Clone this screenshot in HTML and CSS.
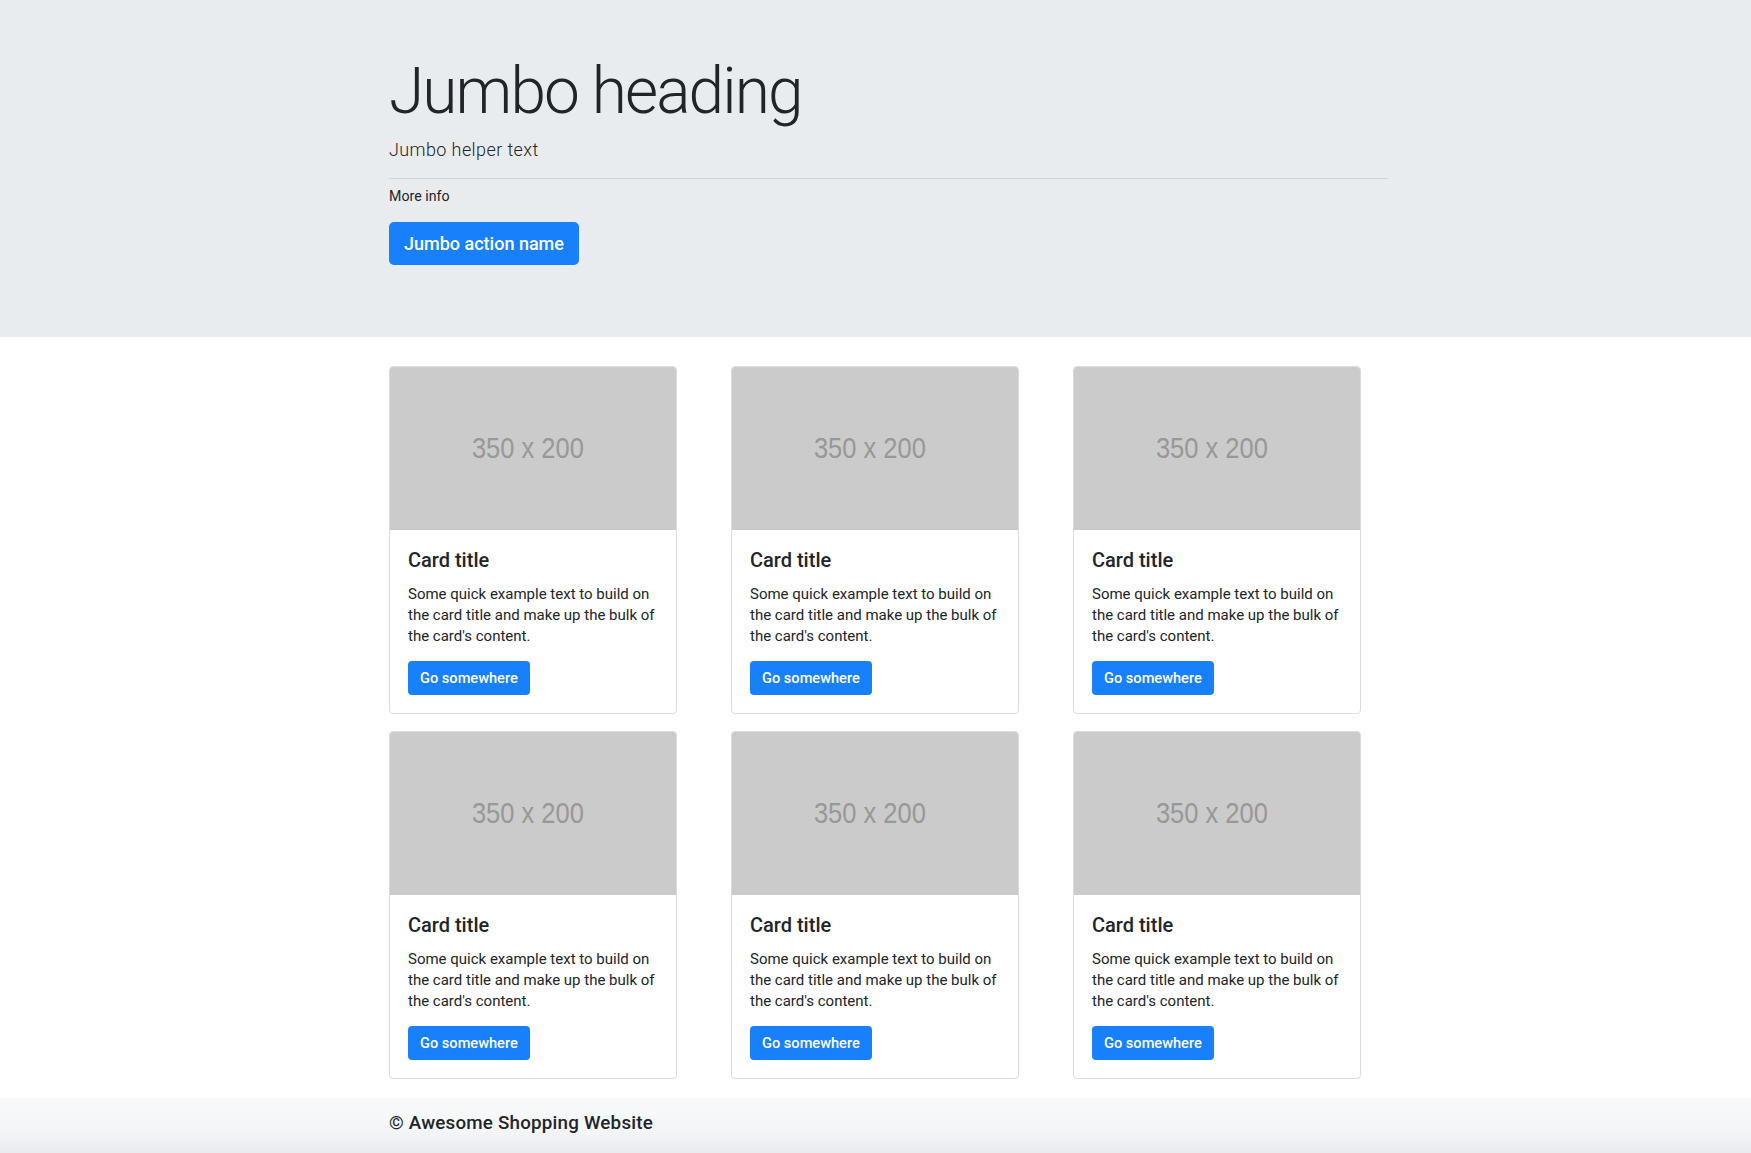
FILE: index.html
```html
<!DOCTYPE html>
<html lang="en">
<head>
<meta charset="utf-8">
<title>Awesome Shopping Website</title>
<link rel="stylesheet" href="styles.css">
</head>
<body>
<header class="jumbotron">
  <div class="container">
    <h1 class="display">Jumbo heading</h1>
    <p class="lead">Jumbo helper text</p>
    <hr class="divider">
    <p class="more">More info</p>
    <a class="btn btn-lg" href="#">Jumbo action name</a>
  </div>
</header>
<main class="container">
  <div class="card-grid">
    <div class="card">
      <div class="placeholder"><span>350 x 200</span></div>
      <div class="card-body">
        <h5 class="card-title">Card title</h5>
        <p class="card-text">Some quick example text to build on the card title and make up the bulk of the card's content.</p>
        <a class="btn btn-sm" href="#">Go somewhere</a>
      </div>
    </div>
    <div class="card">
      <div class="placeholder"><span>350 x 200</span></div>
      <div class="card-body">
        <h5 class="card-title">Card title</h5>
        <p class="card-text">Some quick example text to build on the card title and make up the bulk of the card's content.</p>
        <a class="btn btn-sm" href="#">Go somewhere</a>
      </div>
    </div>
    <div class="card">
      <div class="placeholder"><span>350 x 200</span></div>
      <div class="card-body">
        <h5 class="card-title">Card title</h5>
        <p class="card-text">Some quick example text to build on the card title and make up the bulk of the card's content.</p>
        <a class="btn btn-sm" href="#">Go somewhere</a>
      </div>
    </div>
    <div class="card">
      <div class="placeholder"><span>350 x 200</span></div>
      <div class="card-body">
        <h5 class="card-title">Card title</h5>
        <p class="card-text">Some quick example text to build on the card title and make up the bulk of the card's content.</p>
        <a class="btn btn-sm" href="#">Go somewhere</a>
      </div>
    </div>
    <div class="card">
      <div class="placeholder"><span>350 x 200</span></div>
      <div class="card-body">
        <h5 class="card-title">Card title</h5>
        <p class="card-text">Some quick example text to build on the card title and make up the bulk of the card's content.</p>
        <a class="btn btn-sm" href="#">Go somewhere</a>
      </div>
    </div>
    <div class="card">
      <div class="placeholder"><span>350 x 200</span></div>
      <div class="card-body">
        <h5 class="card-title">Card title</h5>
        <p class="card-text">Some quick example text to build on the card title and make up the bulk of the card's content.</p>
        <a class="btn btn-sm" href="#">Go somewhere</a>
      </div>
    </div>
  </div>
</main>
<footer class="footer">
  <div class="container">
    <p class="copyright">© Awesome Shopping Website</p>
  </div>
</footer>
</body>
</html>
```
FILE: styles.css
```css
* { box-sizing: border-box; }

html, body {
  margin: 0;
  padding: 0;
}

body {
  font-family: Roboto, "Noto Sans", "Liberation Sans", sans-serif;
  color: #212529;
  background: #fff;
}

.container {
  width: 1025px;
  margin: 0 auto;
  padding-left: 26px;
}

.jumbotron {
  background: #e9ecef;
  padding: 54px 0 72px;
}

.display {
  margin: 0;
  font-size: 64px;
  font-weight: 300;
  line-height: 1.2;
  letter-spacing: -1.9px;
}

.lead {
  margin: 5px 0 0;
  font-size: 18px;
  font-weight: 300;
  line-height: 1.5;
  letter-spacing: 0.4px;
}

.divider {
  margin: 15px 0 0;
  border: 0;
  border-top: 1px solid #d2d5d8;
  height: 0;
}

.more {
  margin: 7px 0 0;
  font-size: 14.2px;
  line-height: 21px;
}

.btn {
  display: inline-flex;
  align-items: center;
  color: #fff;
  background: #1880fb;
  text-decoration: none;
  font-weight: 500;
}

.btn-lg {
  margin-top: 15px;
  height: 43px;
  padding: 0 15px;
  border-radius: 5px;
  font-size: 18px;
}

.card-grid {
  display: grid;
  grid-template-columns: repeat(3, 288px);
  column-gap: 54px;
  row-gap: 17px;
  padding: 29px 0 19px;
}

.card {
  border: 1px solid #dcdcdc;
  border-radius: 4px;
  overflow: hidden;
  background: #fff;
}

.placeholder {
  height: 164px;
  background: #cbcbcb;
  display: flex;
  align-items: center;
  justify-content: center;
  padding-right: 10px;
  margin: -1px -1px 0;
}

.placeholder span {
  font-family: "Liberation Sans", Arial, sans-serif;
  font-size: 30px;
  color: #989898;
  transform: scaleX(0.85);
}

.card-body {
  padding: 18px;
}

.card-title {
  margin: 0 0 12px;
  font-size: 20px;
  font-weight: 500;
  line-height: 24px;
}

.card-text {
  margin: 0 0 14px;
  font-size: 15px;
  line-height: 21px;
}

.btn-sm {
  height: 34px;
  padding: 0 12px;
  border-radius: 4px;
  font-size: 14.6px;
}

.footer {
  background: linear-gradient(#f8f9fa 0, #f5f6f8 30px, #e9ebee 55px, #e9ebee 100%);
  padding: 12px 0 24px;
}

.copyright {
  margin: 0;
  font-size: 18.8px;
  font-weight: 500;
  line-height: 26px;
  letter-spacing: 0.2px;
  color: #212529;
}
```
